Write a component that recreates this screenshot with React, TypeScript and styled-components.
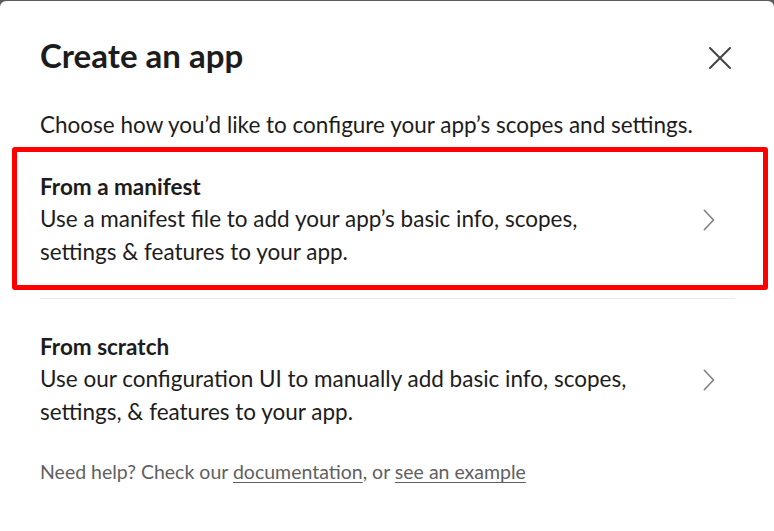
import React from "react";
import styled, { createGlobalStyle } from "styled-components";

const Global = createGlobalStyle`
  html, body { margin: 0; padding: 0; background: #5c5c5c; }
  body { font-family: Lato, "Noto Sans", sans-serif; -webkit-font-smoothing: antialiased; }
`;

const Modal = styled.div`
  margin-top: 1px;
  height: 530px;
  background: #ffffff;
  border-radius: 6px 6px 0 0;
  box-sizing: border-box;
  padding: 34px 39px 0 40px;
  color: #1d1c1d;
`;

const Header = styled.div`
  display: flex;
  align-items: center;
  justify-content: space-between;
  height: 40px;
`;

const Title = styled.h1`
  margin: 0;
  font-size: 33px;
  line-height: 40px;
  font-weight: 700;
  color: #1d1c1d;
`;

const CloseButton = styled.button`
  border: 0;
  background: none;
  padding: 0;
  width: 24px;
  height: 24px;
  margin-right: 3px;
  margin-top: 6px;
  display: flex;
  align-items: center;
  justify-content: center;
  color: #454245;
  cursor: pointer;
`;

const Subtitle = styled.p`
  margin: 35px 0 0;
  font-size: 22.5px;
  line-height: 30px;
  color: #1d1c1d;
`;

const Option = styled.div<{ $highlight?: boolean }>`
  position: relative;
  display: flex;
  align-items: center;
  justify-content: space-between;
  padding: ${(p) => (p.$highlight ? "31px 0 30px" : "32px 0 30px")};
  border-bottom: ${(p) => (p.$highlight ? "1px solid #e8e8e8" : "none")};
  &::before {
    content: "";
    display: ${(p) => (p.$highlight ? "block" : "none")};
    position: absolute;
    top: 7px;
    bottom: 8px;
    left: -28px;
    right: -33px;
    border: 5px solid #ff0000;
    border-radius: 3px;
    pointer-events: none;
  }
`;

const OptionText = styled.div`
  display: flex;
  flex-direction: column;
`;

const OptionTitle = styled.div`
  font-size: 22.5px;
  line-height: 32px;
  font-weight: 700;
  color: #1d1c1d;
`;

const OptionDesc = styled.div`
  font-size: 22.5px;
  line-height: 32.5px;
  color: #1d1c1d;
  max-width: 640px;
`;

const Chevron = styled.span`
  display: flex;
  margin-right: 20px;
  color: #868686;
`;

const Footer = styled.p`
  margin: 1px 0 0;
  font-size: 19.5px;
  line-height: 26px;
  color: #616061;
`;

const Link = styled.a`
  color: #616061;
  text-decoration: underline;
  text-underline-offset: 3px;
  text-decoration-thickness: 1px;
`;

const ChevronIcon = () => (
  <svg width="12" height="22" viewBox="0 0 12 22" fill="none">
    <path d="M1.5 1.5 L10.5 11 L1.5 20.5" stroke="currentColor" strokeWidth="1.8" strokeLinecap="round" strokeLinejoin="round" />
  </svg>
);

const CloseIcon = () => (
  <svg width="22" height="22" viewBox="0 0 22 22" fill="none">
    <path d="M1 1 L21 21 M21 1 L1 21" stroke="currentColor" strokeWidth="2" strokeLinecap="round" />
  </svg>
);

export default function App() {
  return (
    <>
      <Global />
      <Modal>
        <Header>
          <Title>Create an app</Title>
          <CloseButton aria-label="Close">
            <CloseIcon />
          </CloseButton>
        </Header>
        <Subtitle>Choose how you’d like to configure your app’s scopes and settings.</Subtitle>
        <Option $highlight>
          <OptionText>
            <OptionTitle>From a manifest</OptionTitle>
            <OptionDesc>
              Use a manifest file to add your app’s basic info, scopes,
              <br />
              settings &amp; features to your app.
            </OptionDesc>
          </OptionText>
          <Chevron>
            <ChevronIcon />
          </Chevron>
        </Option>
        <Option>
          <OptionText>
            <OptionTitle>From scratch</OptionTitle>
            <OptionDesc>
              Use our configuration UI to manually add basic info, scopes,
              <br />
              settings, &amp; features to your app.
            </OptionDesc>
          </OptionText>
          <Chevron>
            <ChevronIcon />
          </Chevron>
        </Option>
        <Footer>
          Need help? Check our <Link href="#">documentation</Link>, or <Link href="#">see an example</Link>
        </Footer>
      </Modal>
    </>
  );
}
